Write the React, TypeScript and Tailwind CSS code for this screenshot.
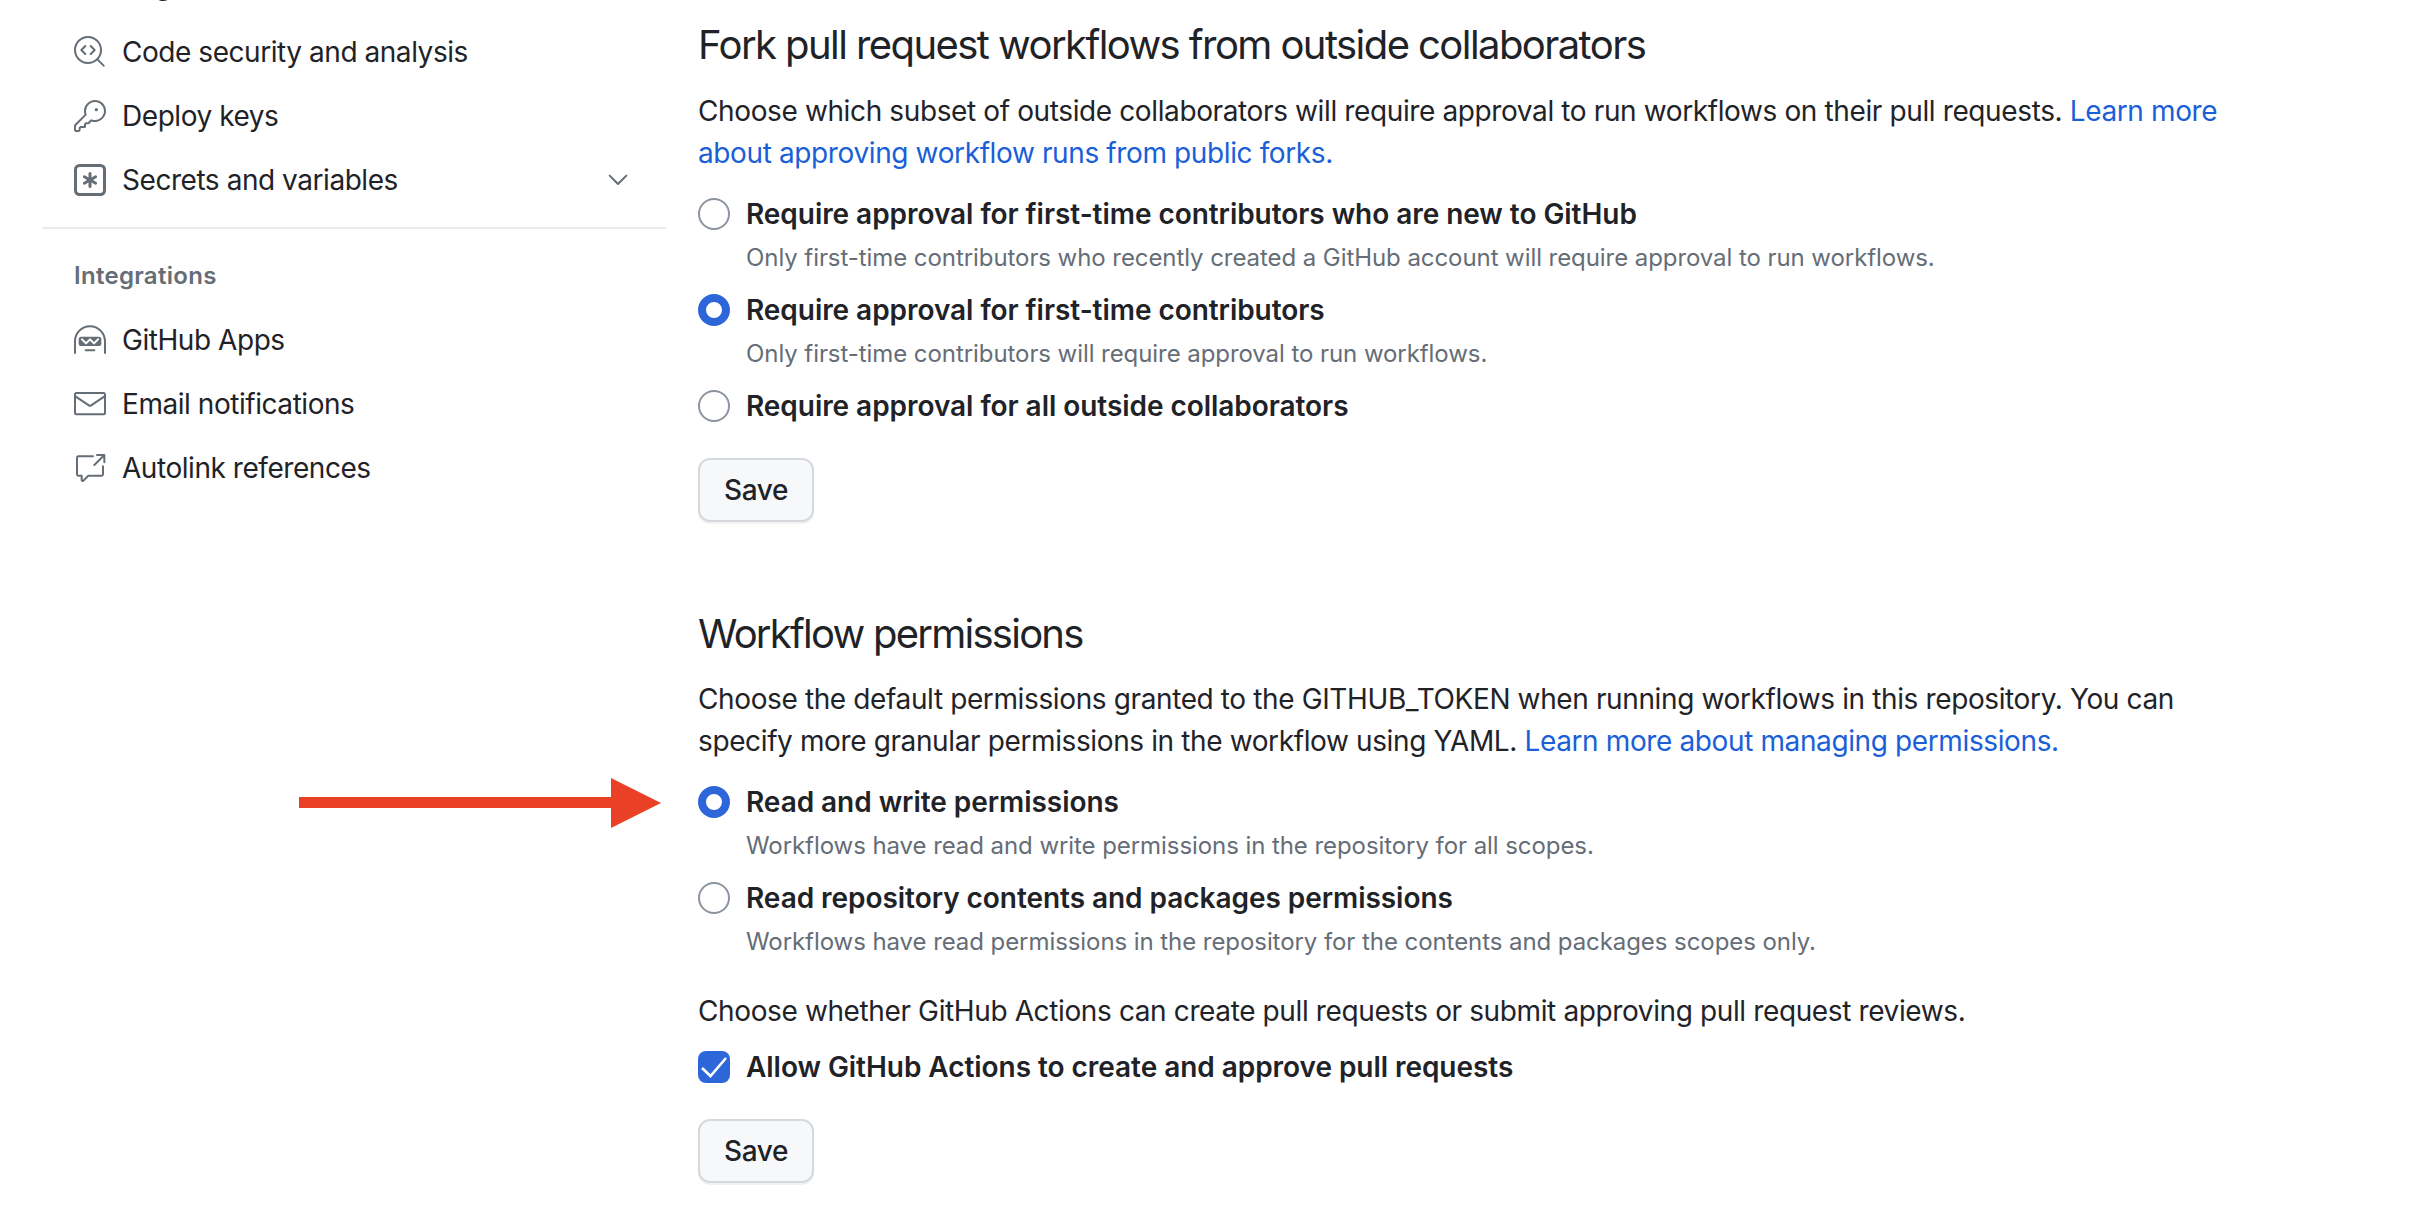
import React from 'react';
import { GoCodescan, GoKey, GoChevronDown, GoHubot, GoMail, GoCrossReference } from 'react-icons/go';

const KeyAsterisk: React.FC = () => (
  <svg width="32" height="32" viewBox="0 0 16 16" fill="currentColor">
    <path d="M0 2.75A2.75 2.75 0 0 1 2.75 0h10.5A2.75 2.75 0 0 1 16 2.75v10.5A2.75 2.75 0 0 1 13.25 16H2.75A2.75 2.75 0 0 1 0 13.25ZM2.75 1.5c-.69 0-1.25.56-1.25 1.25v10.5c0 .69.56 1.25 1.25 1.25h10.5c.69 0 1.25-.56 1.25-1.25V2.75c0-.69-.56-1.25-1.25-1.25Z" />
    <path d="M8 4a.75.75 0 0 1 .75.75V6.7l1.69-.975a.75.75 0 0 1 .75 1.3L9.5 8l1.69.976a.75.75 0 0 1-.75 1.298L8.75 9.3v1.951a.75.75 0 0 1-1.5 0V9.299l-1.69.976a.75.75 0 0 1-.75-1.3L6.5 8l-1.69-.975a.75.75 0 0 1 .75-1.3l1.69.976V4.75A.75.75 0 0 1 8 4Z" />
  </svg>
);

const SideItem: React.FC<{ icon: React.ReactNode; label: string; chevron?: boolean }> = ({ icon, label, chevron }) => (
  <div className="flex h-16 items-center pl-8 pr-8">
    <span className="flex w-12 shrink-0 text-[#656d76]">{icon}</span>
    <span className="flex-1 text-[28px] leading-10 tracking-[-0.45px] text-[#1f2328]">{label}</span>
    {chevron && <GoChevronDown size={32} className="text-[#656d76]" />}
  </div>
);

const RadioOption: React.FC<{ label: string; note?: string; checked?: boolean }> = ({ label, note, checked }) => (
  <div className="mb-[14px] last:mb-0">
    <div className="flex h-10 items-center">
      {checked ? (
        <span className="h-8 w-8 shrink-0 rounded-full border-8 border-[#2d66d9] bg-white"></span>
      ) : (
        <span className="h-8 w-8 shrink-0 rounded-full border-2 border-[#8c959f] bg-white"></span>
      )}
      <span className="ml-4 text-[28px] font-semibold tracking-[-0.05px] text-[#1f2328]">{label}</span>
    </div>
    {note && <p className="mt-1.5 pl-12 text-[24px] leading-9 tracking-[-0.07px] text-[#656d76]">{note}</p>}
  </div>
);

const SaveButton: React.FC = () => (
  <button className="block h-16 w-[116px] rounded-xl border-2 border-[#d5d9de] bg-[#f6f8fa] text-[28px] font-medium tracking-[-0.35px] text-[#1f2328] shadow-[0_2px_0_rgba(31,35,40,0.06)]">
    Save
  </button>
);

export default function App() {
  return (
    <div className="relative flex h-[1214px] overflow-hidden bg-white font-['Inter',sans-serif]">
      {/* Sidebar */}
      <aside className="ml-[42px] w-[624px] shrink-0 pt-5">
        <div className="relative -top-[3px] -mt-16">
          <SideItem icon={<span className="h-8 w-8"></span>} label="Pages" />
        </div>
        <SideItem icon={<GoCodescan size={32} />} label="Code security and analysis" />
        <SideItem icon={<GoKey size={32} />} label="Deploy keys" />
        <SideItem icon={<KeyAsterisk />} label="Secrets and variables" chevron />
        <div className="mt-[15px] h-0.5 bg-[#e9ecef]"></div>
        <h3 className="mt-[29px] pl-8 text-[24px] font-semibold leading-9 tracking-[0.3px] text-[#656d76]">Integrations</h3>
        <div className="mt-3.5">
          <SideItem icon={<GoHubot size={32} />} label="GitHub Apps" />
          <SideItem icon={<GoMail size={32} />} label="Email notifications" />
          <SideItem icon={<GoCrossReference size={32} />} label="Autolink references" />
        </div>
      </aside>

      {/* Main */}
      <main className="ml-8 w-[1560px] shrink-0 pt-[15px]">
        <h2 className="text-[40px] font-normal leading-[60px] tracking-[-1.57px] text-[#1f2328]">
          Fork pull request workflows from outside collaborators
        </h2>
        <p className="mt-[15px] text-[28px] leading-[42px] tracking-[-0.38px] text-[#1f2328]">
          Choose which subset of outside collaborators will require approval to run workflows on their pull requests.{' '}
          <a className="text-[#1a5fd8]">Learn more about approving workflow runs from public forks.</a>
        </p>
        <div className="mt-5">
          <RadioOption
            label="Require approval for first-time contributors who are new to GitHub"
            note="Only first-time contributors who recently created a GitHub account will require approval to run workflows."
          />
          <RadioOption
            label="Require approval for first-time contributors"
            note="Only first-time contributors will require approval to run workflows."
            checked
          />
          <RadioOption label="Require approval for all outside collaborators" />
        </div>
        <div className="mt-8">
          <SaveButton />
        </div>

        <h2 className="mt-[82px] text-[40px] font-normal leading-[60px] tracking-[-1.75px] text-[#1f2328]">
          Workflow permissions
        </h2>
        <p className="mt-3.5 text-[28px] leading-[42px] tracking-[-0.38px] text-[#1f2328]">
          Choose the default permissions granted to the GITHUB_TOKEN when running workflows in this repository. You can
          specify more granular permissions in the workflow using YAML.{' '}
          <a className="text-[#1a5fd8]">Learn more about managing permissions.</a>
        </p>
        <div className="mt-5">
          <RadioOption
            label="Read and write permissions"
            note="Workflows have read and write permissions in the repository for all scopes."
            checked
          />
          <RadioOption
            label="Read repository contents and packages permissions"
            note="Workflows have read permissions in the repository for the contents and packages scopes only."
          />
        </div>
        <p className="mt-[30px] text-[28px] leading-[42px] tracking-[-0.38px] text-[#1f2328]">
          Choose whether GitHub Actions can create pull requests or submit approving pull request reviews.
        </p>
        <div className="mt-[15px] flex h-10 items-center">
          <span className="flex h-8 w-8 items-center justify-center rounded-lg bg-[#2d66d9]">
            <svg width="32" height="32" viewBox="0 0 32 32" fill="none">
              <path d="M4 17l8.5 8L28 7" stroke="white" strokeWidth="2.6" />
            </svg>
          </span>
          <span className="ml-4 text-[28px] font-semibold tracking-[-0.05px] text-[#1f2328]">
            Allow GitHub Actions to create and approve pull requests
          </span>
        </div>
        <div className="mt-8">
          <SaveButton />
        </div>
      </main>

      {/* Red annotation arrow */}
      <svg className="absolute left-[299px] top-[778px]" width="362" height="50" viewBox="0 0 362 50">
        <path d="M0 19H312V0L362 25L312 50V30H0Z" fill="#ea4025" />
      </svg>
    </div>
  );
}
